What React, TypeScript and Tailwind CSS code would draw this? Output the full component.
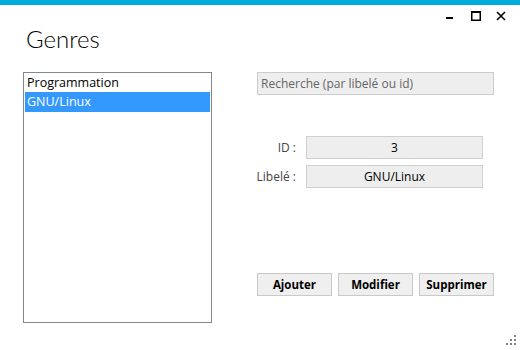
import React from "react";

const font = { fontFamily: '"Open Sans", "Noto Sans", sans-serif' };

function WindowControls() {
  return (
    <div className="flex h-[16px] items-start justify-end pr-[14px] pt-[6px]">
      <svg width="10" height="10" viewBox="0 0 10 10">
        <rect x="0" y="6" width="7" height="2" fill="#000" />
      </svg>
      <svg className="ml-[15px]" width="10" height="10" viewBox="0 0 10 10">
        <rect x="0.75" y="0.75" width="8.5" height="8.5" fill="none" stroke="#000" strokeWidth="1.5" />
        <rect x="0" y="0" width="10" height="2" fill="#000" />
      </svg>
      <svg className="ml-[15px]" width="10" height="10" viewBox="0 0 10 10">
        <path d="M1 1 L9 9 M9 1 L1 9" stroke="#000" strokeWidth="1.6" />
      </svg>
    </div>
  );
}

function Field({ label, value }: { label: string; value: string }) {
  return (
    <div className="flex items-center">
      <div className="w-[49px] text-right text-[12px] text-[#444]">{label}</div>
      <div className="ml-[10px] flex h-[23px] w-[177px] items-center justify-center border border-[#d0d0d0] bg-[#eeeeee] text-[12px] text-black">
        {value}
      </div>
    </div>
  );
}

function Btn({ children }: { children: React.ReactNode }) {
  return (
    <button className="flex h-[23px] w-[75px] items-center justify-center border border-[#c9c9c9] bg-[#efefef] text-[11.5px] font-bold text-black">
      {children}
    </button>
  );
}

export default function App() {
  return (
    <div className="relative h-[350px] w-[520px] overflow-hidden bg-white" style={font}>
      <div className="h-[5px] bg-[#00acd9]" />
      <WindowControls />
      <div
        className="pl-[26px] pt-[1px] text-[24px] font-light leading-[33px] text-black"
        style={{ fontFamily: 'Lato, "Open Sans", sans-serif' }}
      >
        Genres
      </div>
      <div className="mt-[17px] flex items-start">
        <div className="ml-[23px] h-[251px] w-[189px] border border-[#828790] bg-white p-[1px]">
          <div className="flex h-[18px] items-center pl-[2px] text-[12.5px] text-black">Programmation</div>
          <div className="flex h-[20px] items-center bg-[#3399ff] pl-[2px] text-[12.5px] text-white">GNU/Linux</div>
        </div>
        <div className="ml-[35px] flex flex-col">
          <div className="ml-[10px] flex h-[23px] w-[237px] items-center border border-[#cccccc] bg-[#eeeeee] pl-[3px] text-[12px] text-[#666]">
            Recherche (par libelé ou id)
          </div>
          <div className="mt-[41px] flex flex-col gap-[6px]">
            <Field label="ID :" value="3" />
            <Field label="Libelé :" value="GNU/Linux" />
          </div>
          <div className="ml-[10px] mt-[85px] flex gap-[6px]">
            <Btn>Ajouter</Btn>
            <Btn>Modifier</Btn>
            <Btn>Supprimer</Btn>
          </div>
        </div>
      </div>
      <div className="absolute bottom-[4px] right-[3px]">
        <svg width="12" height="12" viewBox="0 0 12 12">
          <rect x="9" y="1" width="2" height="2" fill="#808080" />
          <rect x="5" y="5" width="2" height="2" fill="#808080" />
          <rect x="9" y="5" width="2" height="2" fill="#808080" />
          <rect x="1" y="9" width="2" height="2" fill="#808080" />
          <rect x="5" y="9" width="2" height="2" fill="#808080" />
          <rect x="9" y="9" width="2" height="2" fill="#808080" />
        </svg>
      </div>
    </div>
  );
}
